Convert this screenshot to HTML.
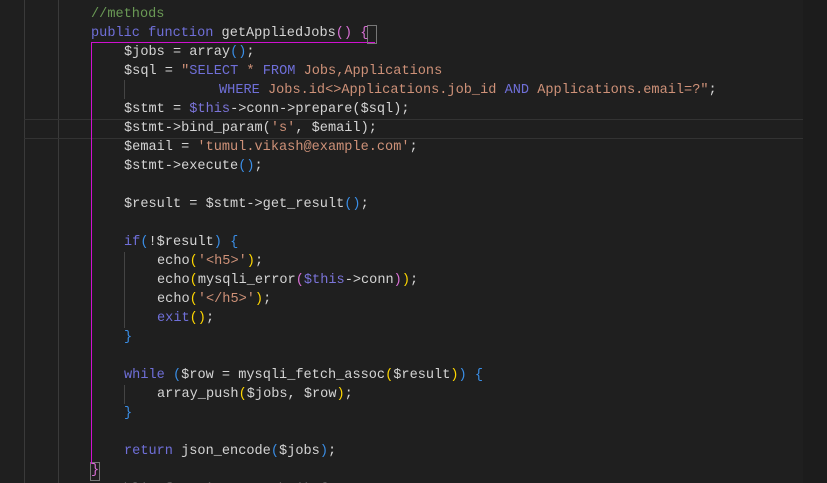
<!DOCTYPE html>
<html><head><meta charset="utf-8"><style>
html,body{margin:0;padding:0;background:#1f1f1f;width:827px;height:483px;overflow:hidden;position:relative}
.l{position:absolute;left:0;height:19px;line-height:19px;font-family:"Liberation Mono",monospace;font-size:13.6px;color:#d4d4d4;white-space:pre}
.k{color:#6f6fd8}.s{color:#ce9178}.c{color:#6a9955}.t{color:#7b74d9}.y{color:#ffd700}.p{color:#da70d6}.b{color:#3a8ee6}
.g{position:absolute;width:1px;background:#3a3a3a}
</style></head><body>
<div class="g" style="left:24px;top:0;height:483px"></div>
<div class="g" style="left:58px;top:0;height:483px"></div>
<div style="position:absolute;left:24px;top:119px;width:779px;height:18px;border-top:1px solid #333;border-bottom:1px solid #333"></div>
<div class="g" style="left:124px;top:80px;height:19px;background:#444"></div>
<div class="g" style="left:124px;top:252px;height:76px;background:#444"></div>
<div class="g" style="left:124px;top:385px;height:19px;background:#444"></div>
<div style="position:absolute;left:91px;top:42px;width:284px;height:1px;background:#d010d0"></div>
<div style="position:absolute;left:91px;top:42px;width:1px;height:422px;background:#d010d0;z-index:5"></div>
<div style="position:absolute;left:367px;top:25px;width:8px;height:17px;border:1px solid #777"></div>
<div style="position:absolute;left:90px;top:462px;width:8px;height:17px;border:1px solid #777"></div>
<div style="position:absolute;left:803px;top:0;width:24px;height:483px;background:#1c1c1c"></div>
<div class="l" style="top:5px;left:91px"><span class="c">//methods</span></div>
<div class="l" style="top:24px;left:91px"><span class="k">public</span> <span class="k">function</span> getAppliedJobs<span class="p">()</span> <span class="p">{</span></div>
<div class="l" style="top:43px;left:124px">$jobs = array<span class="b">()</span>;</div>
<div class="l" style="top:62px;left:124px">$sql = <span class="s">"</span><span class="k">SELECT</span> <span class="s">*</span> <span class="k">FROM</span> <span class="s">Jobs,Applications</span></div>
<div class="l" style="top:81px;left:219px"><span class="k">WHERE</span> <span class="s">Jobs.id&lt;&gt;Applications.job_id</span> <span class="k">AND</span> <span class="s">Applications.email=?"</span>;</div>
<div class="l" style="top:100px;left:124px">$stmt = <span class="t">$this</span>-&gt;conn-&gt;prepare($sql);</div>
<div class="l" style="top:119px;left:124px">$stmt-&gt;bind_param(<span class="s">'s'</span>, $email);</div>
<div class="l" style="top:138px;left:124px">$email = <span class="s">'tumul.vikash@example.com'</span>;</div>
<div class="l" style="top:157px;left:124px">$stmt-&gt;execute<span class="b">()</span>;</div>
<div class="l" style="top:195px;left:124px">$result = $stmt-&gt;get_result<span class="b">()</span>;</div>
<div class="l" style="top:233px;left:124px"><span class="k">if</span><span class="b">(</span>!$result<span class="b">)</span> <span class="b">{</span></div>
<div class="l" style="top:252px;left:157px">echo<span class="y">(</span><span class="s">'&lt;h5&gt;'</span><span class="y">)</span>;</div>
<div class="l" style="top:271px;left:157px">echo<span class="y">(</span>mysqli_error<span class="p">(</span><span class="t">$this</span>-&gt;conn<span class="p">)</span><span class="y">)</span>;</div>
<div class="l" style="top:290px;left:157px">echo<span class="y">(</span><span class="s">'&lt;/h5&gt;'</span><span class="y">)</span>;</div>
<div class="l" style="top:309px;left:157px"><span class="k">exit</span><span class="y">()</span>;</div>
<div class="l" style="top:328px;left:124px"><span class="b">}</span></div>
<div class="l" style="top:366px;left:124px"><span class="k">while</span> <span class="b">(</span>$row = mysqli_fetch_assoc<span class="y">(</span>$result<span class="y">)</span><span class="b">)</span> <span class="b">{</span></div>
<div class="l" style="top:385px;left:157px">array_push<span class="y">(</span>$jobs, $row<span class="y">)</span>;</div>
<div class="l" style="top:404px;left:124px"><span class="b">}</span></div>
<div class="l" style="top:442px;left:124px"><span class="k">return</span> json_encode<span class="b">(</span>$jobs<span class="b">)</span>;</div>
<div class="l" style="top:461px;left:91px"><span class="p">}</span></div>
<div class="l" style="top:480px;left:91px;color:#555">  public function getJobs() {</div>
</body></html>
